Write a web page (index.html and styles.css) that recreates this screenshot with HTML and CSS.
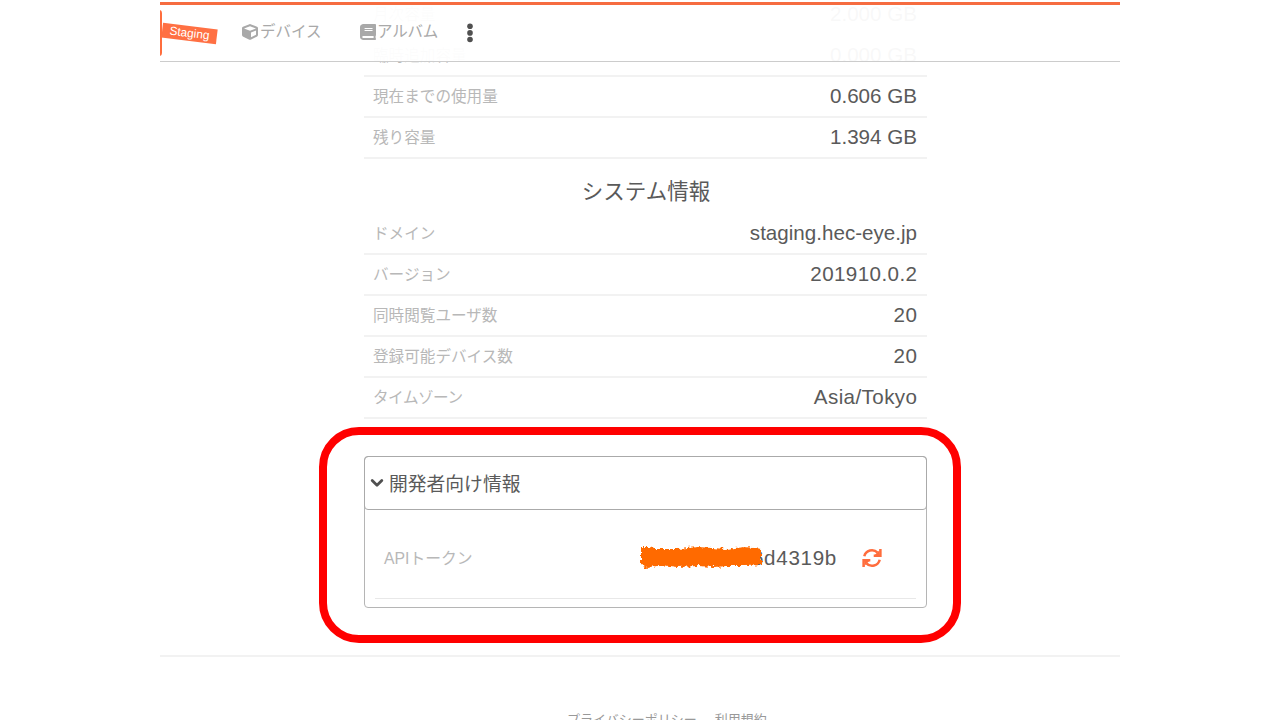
FILE: index.html
```html
<!DOCTYPE html>
<html lang="ja">
<head>
<meta charset="utf-8">
<title>システム情報</title>
<link rel="stylesheet" href="styles.css">
</head>
<body>
<div class="page">
  <header class="topbar">
    <span class="logo-edge"></span>
    <span class="env-tag">Staging</span>
    <nav class="nav">
      <a class="nav-item device"><svg class="icon" viewBox="0 0 512 512"><path d="M239.1 6.3l-208 78c-18.700 7-31.100 25-31.100 45v225.100c0 18.200 10.300 34.800 26.500 42.900l208 104c13.500 6.800 29.400 6.800 42.900 0l208-104c16.300-8.100 26.500-24.800 26.500-42.900V129.300c0-20-12.400-37.900-31.100-44.900l-208-78C262 2.200 250 2.200 239.100 6.300zM256 68.400l192 72v1.100l-192 78-192-78v-1.100l192-72zm32 356V275.500l160-65v133.900l-160 80z"/></svg><span>デバイス</span></a>
      <a class="nav-item album"><svg class="icon" viewBox="0 0 448 512" preserveAspectRatio="none"><path d="M448 360V24c0-13.300-10.700-24-24-24H96C43 0 0 43 0 96v320c0 53 43 96 96 96h328c13.300 0 24-10.700 24-24v-16c0-7.500-3.500-14.300-8.900-18.700-4.200-15.400-4.200-59.300 0-74.700 5.400-4.300 8.900-11.100 8.900-18.600zM128 134c0-3.300 2.700-6 6-6h212c3.300 0 6 2.700 6 6v20c0 3.300-2.700 6-6 6H134c-3.300 0-6-2.700-6-6v-20zm0 64c0-3.300 2.700-6 6-6h212c3.300 0 6 2.700 6 6v20c0 3.300-2.700 6-6 6H134c-3.300 0-6-2.700-6-6v-20zm253.400 250H96c-17.700 0-32-14.300-32-32s14.300-32 32-32h285.400c-1.900 17.100-1.900 46.900 0 64z"/></svg><span>アルバム</span></a>
      <svg class="more" viewBox="0 0 8 20"><circle cx="4" cy="3.200" r="2.800"/><circle cx="4" cy="9.900" r="2.800"/><circle cx="4" cy="16.500" r="2.800"/></svg>
    </nav>
  </header>
  <main class="content">
    <dl class="list">
      <div class="row"><dt>月次容量</dt><dd>2.000 GB</dd></div>
      <div class="row"><dt>臨時追加容量</dt><dd>0.000 GB</dd></div>
      <div class="row"><dt>現在までの使用量</dt><dd>0.606 GB</dd></div>
      <div class="row"><dt>残り容量</dt><dd>1.394 GB</dd></div>
    </dl>
    <h2 class="title">システム情報</h2>
    <dl class="list">
      <div class="row"><dt>ドメイン</dt><dd>staging.hec-eye.jp</dd></div>
      <div class="row"><dt>バージョン</dt><dd class="version">201910.0.2</dd></div>
      <div class="row"><dt>同時閲覧ユーザ数</dt><dd class="count">20</dd></div>
      <div class="row"><dt>登録可能デバイス数</dt><dd class="count">20</dd></div>
      <div class="row"><dt class="tight">タイムゾーン</dt><dd class="zone">Asia/Tokyo</dd></div>
    </dl>
    <section class="panel">
      <div class="panel-head"><svg class="chevron" viewBox="0 0 14 10"><path d="M2.200 2.500 7 7.200l4.800-4.700"/></svg><span>開発者向け情報</span></div>
      <div class="panel-row">
        <span class="api-label">APIトークン</span>
        <span class="token">6d4319b
          <svg class="scribble" viewBox="0 0 126 26">
            <defs><filter id="rough" x="-5%" y="-20%" width="110%" height="140%"><feTurbulence type="fractalNoise" baseFrequency=".3" numOctaves="2" seed="4"/><feDisplacementMap in="SourceGraphic" scale="6" xChannelSelector="R" yChannelSelector="G"/></filter></defs>
            <path filter="url(#rough)" d="M3 3 12 3 16 5 40 5 60 3 88 5 107 3 123 5V21L108 22 90 22 76 23 60 22 40 23 22 21 9 24 3 21Z"/>
          </svg>
        </span>
        <svg class="refresh" viewBox="0 0 20 20"><path class="arc" d="M2.300 8.300A7.800 7.800 0 0 1 15.600 4.700M17.700 11.700A7.800 7.800 0 0 1 4.400 15.300"/><path class="arc" d="M18.400 1v6.700h-6.700M1.600 19v-6.700h6.700"/><path d="M17.500 2.200v5h-5zM2.500 17.800v-5h5z"/></svg>
      </div>
    </section>
  </main>
  <footer class="footer"><span>プライバシーポリシー</span><span>利用規約</span></footer>
  <div class="highlight"></div>
</div>
</body>
</html>
```
FILE: styles.css
```css
* { box-sizing: border-box; }
body { margin: 0; background: #fff; overflow: hidden; font-family: "Liberation Sans", "Noto Sans CJK JP", sans-serif; color: #5a5a5a; }
.page { position: relative; width: 960px; height: 720px; margin: 0 auto; overflow: hidden; }
.topbar { position: absolute; z-index: 2; inset: 0 0 auto; height: 62px; background: linear-gradient(#fff 0 2px, transparent 2px), rgba(255,255,255,.955); border-bottom: 1px solid #ccc; }
.topbar::before { content: ""; position: absolute; inset: 2px 0 auto; height: 3px; background: #f66c40; }
.logo-edge { position: absolute; left: -8px; top: 10px; width: 10px; height: 46px; border-radius: 3px; background: #ff6d3d; }
.env-tag { position: absolute; left: 2px; top: 26px; width: 55px; height: 15px; line-height: 15px; text-align: center; font-size: 11.800px; color: #fff; background: #ff7043; transform: rotate(7deg); }
.nav { display: flex; align-items: center; height: 63px; padding-left: 82px; color: #a9a9a9; font-size: 15.500px; }
.nav-item { display: flex; align-items: center; line-height: 20px; gap: 2px; }
.device { width: 118px; }
.album { width: 107px; gap: 1px; letter-spacing: -.2px; }
.icon { width: 16px; height: 16px; fill: currentColor; }
.more { width: 8px; height: 20px; margin: 3px 0 0 -1px; fill: #505050; }
.content { width: 563px; margin: -5px 0 0 204px; }
.list { margin: 0; }
.row { display: flex; align-items: center; justify-content: space-between; height: 41px; padding: 0 10px 0 9px; border-bottom: 2px solid #f2f2f2; }
dt { font-size: 15.600px; color: #b8b8b8; line-height: 24px; }
.tight { letter-spacing: -.5px; }
dd { margin: 0; font-size: 20.600px; line-height: 24px; position: relative; top: -1px; }
.version { letter-spacing: .4px; margin-right: -.4px; }
.count { letter-spacing: .6px; margin-right: -.6px; }
.zone { letter-spacing: .4px; margin-right: -.4px; }
.title { height: 55px; margin: 0; padding: 17px 0 0 1px; font-size: 21.500px; line-height: 32px; font-weight: 400; text-align: center; }
.panel { height: 152px; margin-top: 37px; border: 1px solid #b5b5b5; border-radius: 4px; }
.panel-head { display: flex; align-items: center; height: 54px; margin: -1px; padding: 0 6px 2px 5px; border: 1px solid #aaa; border-radius: 4px; font-size: 18.800px; }
.chevron { width: 14px; height: 10px; margin: 2px 5px 0 0; fill: none; stroke: #505050; stroke-width: 2.800; stroke-linecap: round; stroke-linejoin: round; }
.panel-row { display: flex; align-items: center; height: 90px; margin: 0 10px; padding: 8px 34px 0 9px; border-bottom: 1px solid #e8e8e8; }
.api-label { flex: 1; font-size: 15.800px; color: #b8b8b8; }
.token { position: relative; font-size: 20.600px; letter-spacing: .7px; margin-right: 25px; }
.scribble { position: absolute; right: 73px; top: -2px; width: 126px; height: 26px; fill: #ff6a00; overflow: visible; }
.refresh { width: 20px; height: 20px; fill: #ff6d3d; }
.arc { fill: none; stroke: #ff6d3d; stroke-width: 2.500; }
.footer { display: flex; gap: 18px; height: 80px; margin-top: 47px; padding: 53px 0 0 407px; border-top: 2px solid #f2f2f2; font-size: 13px; line-height: 20px; color: #999; }
.highlight { position: absolute; left: 159px; top: 427px; width: 642px; height: 216px; border: 8px solid #f00; border-radius: 40px; }
```
